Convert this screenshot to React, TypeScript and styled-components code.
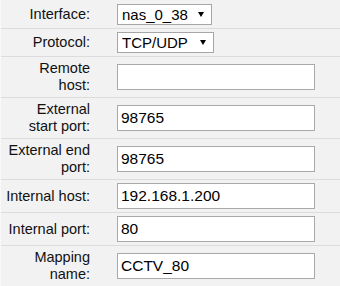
import styled, { createGlobalStyle } from 'styled-components'

const GlobalStyle = createGlobalStyle`
    html, body {
        margin: 0;
        padding: 0;
        background: #f2f2f2;
    }
    body {
        font-family: 'Liberation Sans', Arial, sans-serif;
        color: #111;
    }
`

const Form = styled.div`
    width: 340px;
    padding-top: 1px;
    background: #f2f2f2;
    border-left: 1px solid #f9f9f9;
    box-sizing: border-box;
`

const Row = styled.div`
    display: grid;
    grid-template-columns: 89px 1fr;
    column-gap: 27px;
    align-items: center;
    padding: 3px 0;
    border-bottom: 1px solid #dcdcdc;
`

const Label = styled.div`
    text-align: right;
    font-size: 14.5px;
    line-height: 17px;
    white-space: nowrap;
`

const Input = styled.input`
    box-sizing: border-box;
    width: 198px;
    height: 26px;
    margin: 0;
    padding: 0 3px;
    border: 1px solid #a9a9a9;
    background: #fff;
    font-family: 'Liberation Sans', Arial, sans-serif;
    font-size: 15.5px;
    color: #000;
    outline: none;
`

const Select = styled.div<{ $width: number }>`
    box-sizing: border-box;
    width: ${(props) => props.$width}px;
    height: 21px;
    display: flex;
    align-items: center;
    justify-content: space-between;
    padding: 0 7px 0 4px;
    border: 1px solid #a6a6a6;
    background: #fff;
    font-size: 15px;
    color: #000;
`

const Arrow = styled.svg`
    width: 6px;
    height: 5px;
    fill: #000;
`

type Field = {
    label: string[]
    value: string
    select?: number
}

const fields: Field[] = [
    { label: ['Interface:'], value: 'nas_0_38', select: 95 },
    { label: ['Protocol:'], value: 'TCP/UDP', select: 97 },
    { label: ['Remote', 'host:'], value: '' },
    { label: ['External', 'start port:'], value: '98765' },
    { label: ['External end', 'port:'], value: '98765' },
    { label: ['Internal host:'], value: '192.168.1.200' },
    { label: ['Internal port:'], value: '80' },
    { label: ['Mapping', 'name:'], value: 'CCTV_80' },
]

export default function App(): JSX.Element {
    return (
        <>
            <GlobalStyle />
            <Form>
                {fields.map((field) => (
                    <Row key={field.label.join(' ')}>
                        <Label>
                            {field.label.map((line, i) => (
                                <div key={i}>{line}</div>
                            ))}
                        </Label>
                        <div>
                            {field.select ? (
                                <Select $width={field.select}>
                                    <span>{field.value}</span>
                                    <Arrow viewBox="0 0 6 5">
                                        <path d="M0 0h6L3 5z" />
                                    </Arrow>
                                </Select>
                            ) : (
                                <Input defaultValue={field.value} />
                            )}
                        </div>
                    </Row>
                ))}
            </Form>
        </>
    )
}
